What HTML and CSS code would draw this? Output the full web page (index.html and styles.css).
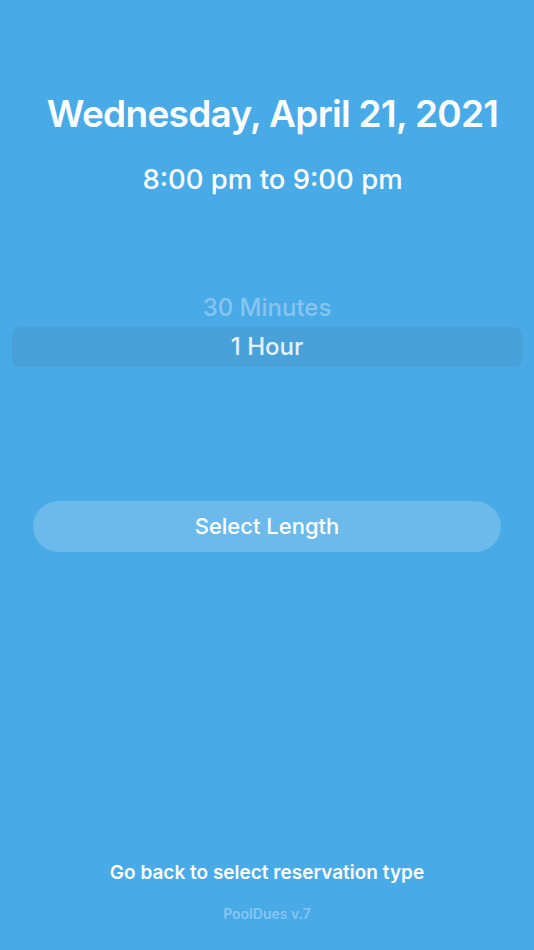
FILE: index.html
```html
<!DOCTYPE html>
<html lang="en">
<head>
    <meta charset="UTF-8" />
    <meta name="viewport" content="width=device-width, initial-scale=1.0" />
    <title>Select Length - PoolDues</title>
    <link rel="stylesheet" href="styles.css">
</head>
<body>
    <div class="screen">
        <div class="header">
            <h1 class="date">Wednesday, April 21, 2021</h1>
            <h2 class="time">8:00 pm to 9:00 pm</h2>
        </div>

        <div class="picker">
            <div class="picker-item faded">30 Minutes</div>
            <div class="picker-item selected">1 Hour</div>
        </div>

        <div class="actions">
            <button class="btn-select">Select Length</button>
        </div>

        <div class="footer">
            <a href="#" class="back-link">Go back to select reservation type</a>
            <div class="version">PoolDues v.7</div>
        </div>
    </div>
</body>
</html>
```

FILE: styles.css
```css
:root {
    --bg-color: #48aae7;
    --band-color: #4aa1da;
    --button-color: #6bbaeb;
    --faded-color: #88c5ee;
}

body {
    margin: 0;
    padding: 0;
    background-color: var(--bg-color);
    font-family: Inter, 'Noto Sans', sans-serif;
    color: white;
}

.screen {
    height: 950px;
    display: flex;
    flex-direction: column;
    box-sizing: border-box;
}

.header {
    padding-top: 90px;
    padding-left: 11px;
    text-align: center;
}

.date {
    margin: 0;
    font-size: 37px;
    font-weight: 600;
    letter-spacing: -0.7px;
    line-height: 48px;
}

.time {
    margin: 24px 0 0;
    font-size: 27.5px;
    font-weight: 500;
    line-height: 34px;
}

.picker {
    margin-top: 93px;
    padding: 0 12px;
    text-align: center;
}

.picker-item {
    font-size: 24px;
    font-weight: 500;
    height: 40px;
    line-height: 40px;
}

.picker-item.faded {
    color: var(--faded-color);
    height: 38px;
    line-height: 38px;
}

.picker-item.selected {
    background-color: var(--band-color);
    border-radius: 8px;
    color: #e6f2fa;
}

.actions {
    margin-top: 134px;
    padding: 0 33px;
}

.btn-select {
    width: 100%;
    height: 51px;
    border: none;
    border-radius: 26px;
    background-color: var(--button-color);
    color: white;
    font-family: inherit;
    font-size: 22px;
    font-weight: 500;
    padding-bottom: 3px;
    cursor: pointer;
}

.footer {
    margin-top: auto;
    padding-bottom: 28px;
    text-align: center;
}

.back-link {
    display: block;
    color: white;
    text-decoration: none;
    font-size: 19px;
    font-weight: 600;
}

.version {
    margin-top: 21px;
    color: var(--faded-color);
    font-size: 14px;
    font-weight: 600;
}
```
